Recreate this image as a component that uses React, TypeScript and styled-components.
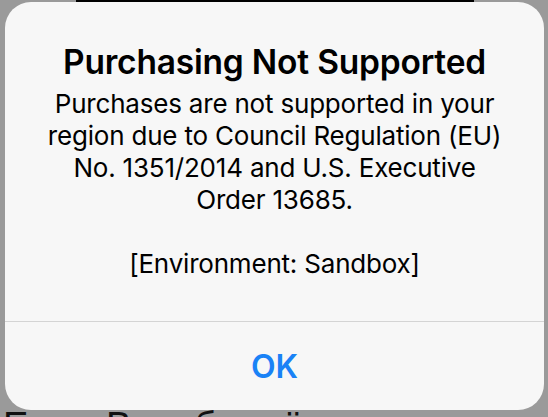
import React from "react";
import styled, { createGlobalStyle } from "styled-components";

const Global = createGlobalStyle`
  html, body { margin: 0; padding: 0; }
  body {
    width: 548px;
    height: 417px;
    overflow: hidden;
    background: #9a9a9a;
    font-family: Inter, "Noto Sans", "Liberation Sans", sans-serif;
  }
`;

const Page = styled.div`
  position: relative;
  width: 548px;
  height: 417px;
  overflow: hidden;
  background: #9a9a9a;
`;

const Backdrop = styled.div`
  display: flex;
  flex-direction: column;
  height: 100%;
`;

const TopBar = styled.div`
  margin-left: 76px;
  width: 398px;
  height: 2px;
  background: #000;
  flex: none;
`;

const BackLines = styled.div`
  flex: 1;
  display: flex;
  flex-direction: column;
  justify-content: flex-end;
`;

const BackText = styled.div`
  font-family: "Liberation Sans", "DejaVu Sans", sans-serif;
  font-size: 38px;
  line-height: 40px;
  color: #111;
  white-space: nowrap;
  margin-bottom: -29px;
  padding-left: 3px;
  letter-spacing: 1px;
`;

const Alert = styled.div`
  position: absolute;
  left: 5px;
  top: 2px;
  width: 539px;
  height: 408px;
  border-radius: 26px;
  background: #f7f7f7;
  display: flex;
  flex-direction: column;
  overflow: hidden;
`;

const Content = styled.div`
  padding: 40px 16px 41px;
  text-align: center;
  color: #000;
  border-bottom: 1px solid #d4d4d4;
`;

const Title = styled.div`
  font-size: 33.5px;
  font-weight: 600;
  line-height: 40px;
  letter-spacing: -0.2px;
  white-space: nowrap;
`;

const Message = styled.div`
  margin-top: 6px;
  font-size: 26px;
  line-height: 32px;
  white-space: pre;
  letter-spacing: -0.2px;
`;

const ActionButton = styled.button`
  flex: 1;
  border: none;
  background: transparent;
  color: #1a82f6;
  font-family: inherit;
  font-size: 32px;
  font-weight: 600;
  padding: 0;
  cursor: pointer;
`;

export default function App() {
  return (
    <>
      <Global />
      <Page>
        <Backdrop>
          <TopBar />
          <BackLines>
            <BackText>Если Вы оборвёте покупку, то</BackText>
          </BackLines>
        </Backdrop>
        <Alert>
          <Content>
            <Title>Purchasing Not Supported</Title>
            <Message>
              {"Purchases are not supported in your\nregion due to Council Regulation (EU)\nNo. 1351/2014 and U.S. Executive\nOrder 13685.\n\n[Environment: Sandbox]"}
            </Message>
          </Content>
          <ActionButton>OK</ActionButton>
        </Alert>
      </Page>
    </>
  );
}
